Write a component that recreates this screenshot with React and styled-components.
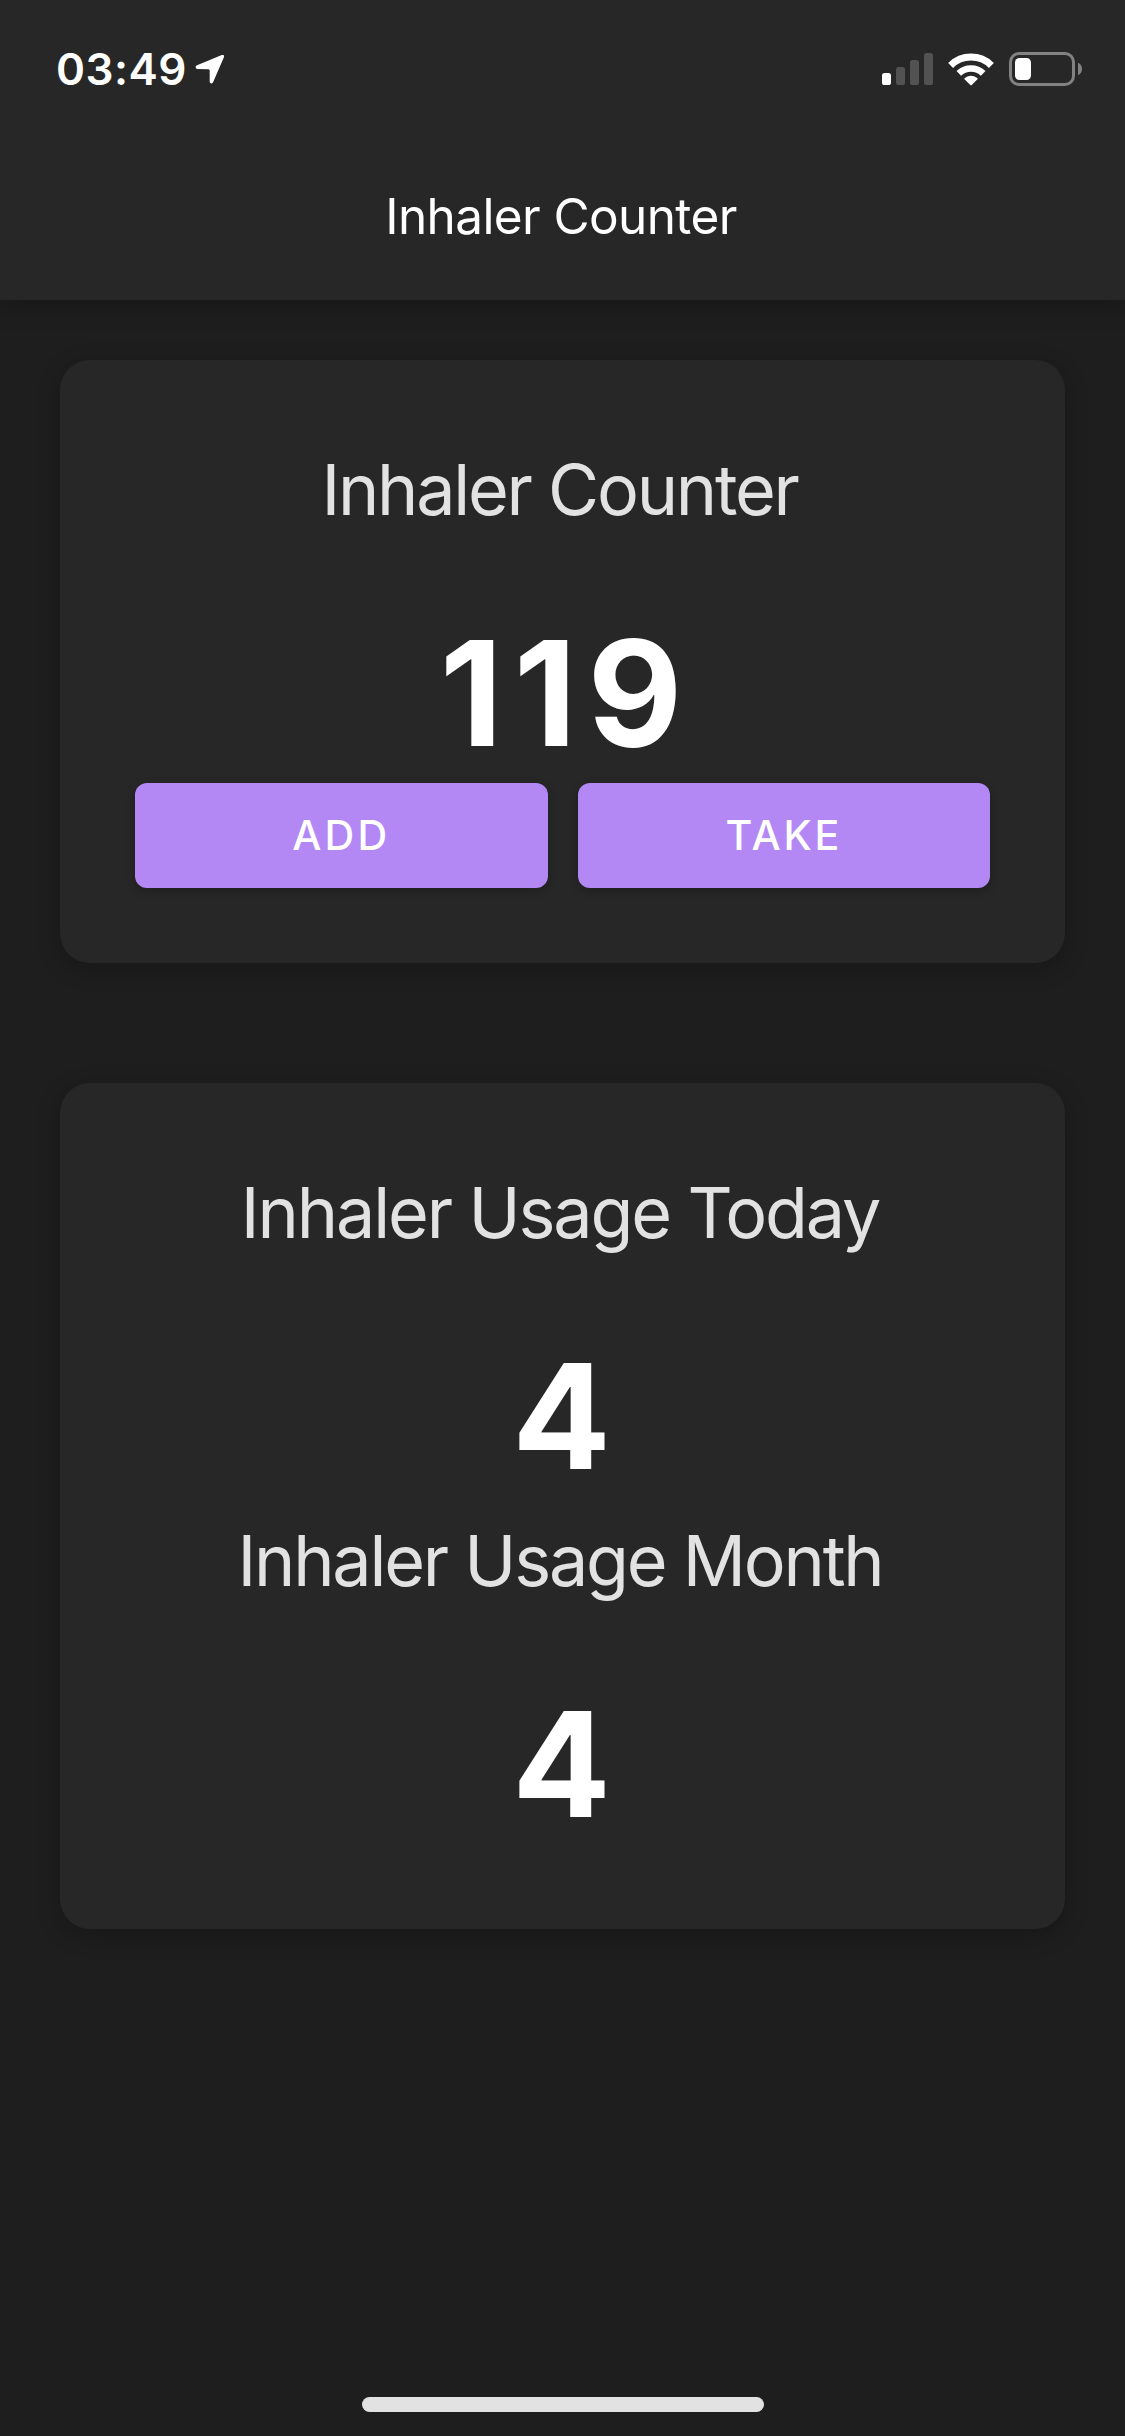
import React from "react";
import styled, { createGlobalStyle } from "styled-components";

const GlobalStyle = createGlobalStyle`
  * { box-sizing: border-box; }
  body { margin: 0; background: #1e1e1e; }
`;

const Screen = styled.div`
  width: 1125px;
  height: 2436px;
  display: flex;
  flex-direction: column;
  background: #1e1e1e;
  color: #fff;
  font-family: Inter, "Liberation Sans", sans-serif;
  overflow: hidden;
`;

const Header = styled.header`
  flex: none;
  height: 300px;
  background: #272727;
  box-shadow: 0 6px 24px rgba(0, 0, 0, 0.24);
`;

const StatusBar = styled.div`
  height: 132px;
  padding: 42px 43px 36px 56px;
  display: flex;
  align-items: center;
  justify-content: space-between;
`;

const StatusGroup = styled.div`
  display: flex;
  align-items: center;
`;

const Clock = styled.span`
  width: 139px;
  font-size: 44px;
  line-height: 54px;
  font-weight: 600;
  letter-spacing: 0.5px;
`;

const StatusIcon = styled.svg`
  display: block;
  flex: none;
  margin-left: ${(p) => p.$gap || 0}px;
`;

const HeaderTitle = styled.h1`
  margin: 0;
  padding-right: 3px;
  font-size: 49.5px;
  line-height: 168px;
  font-weight: 400;
  letter-spacing: -0.6px;
  text-align: center;
`;

const Content = styled.main`
  flex: 1;
  padding: 60px;
  display: flex;
  flex-direction: column;
  gap: 120px;
`;

const Card = styled.section`
  padding: 75px;
  border-radius: 30px;
  background: #272727;
  box-shadow: 0 6px 24px rgba(0, 0, 0, 0.24);
`;

const CardHeading = styled.h2`
  margin: 0 0 59px;
  padding-right: ${(p) => p.$shift ?? 6}px;
  color: #e2e2e2;
  font-size: 70px;
  line-height: 109px;
  font-weight: 400;
  letter-spacing: ${(p) => p.$tracking}px;
  text-align: center;
  white-space: nowrap;
`;

const Count = styled.div`
  padding: ${(p) => (p.$tracking ? "0 0 0 8px" : "0 2px 0 0")};
  font-size: 146px;
  line-height: 180px;
  font-weight: ${(p) => (p.$tracking ? 700 : 730)};
  letter-spacing: ${(p) => p.$tracking || 0}px;
  text-align: center;
`;

const Actions = styled.div`
  display: grid;
  grid-template-columns: 1fr 1fr;
  gap: 30px;
`;

const Button = styled.button`
  height: 105px;
  padding: 0;
  border: 0;
  border-radius: 12px;
  background: #b388f5;
  box-shadow: 0 3px 9px rgba(0, 0, 0, 0.24);
  color: #fff;
  font-family: inherit;
  font-size: 41.2px;
  line-height: 105px;
  font-weight: 460;
  letter-spacing: ${(p) => p.$tracking}px;
  text-transform: uppercase;
`;

const HomeIndicator = styled.div`
  flex: none;
  align-self: center;
  width: 402px;
  height: 15px;
  margin-bottom: 24px;
  border-radius: 7.5px;
  background: #e2e2e2;
`;

function LocationArrow() {
  return (
    <StatusIcon width="30" height="30" viewBox="0 0 30 30">
      <path
        d="M2 11.2 26.8 1.1Q29.9 0.2 28.9 3.2L18.2 28Q17.3 29.9 15.8 29.3Q14.7 28.9 14.7 27.5V16.6Q14.7 15.4 13.5 15.3L2.3 14.9Q0.8 14.7 0.6 13.2Q0.5 11.9 2 11.2Z"
        fill="#fff"
      />
    </StatusIcon>
  );
}

const bars = [
  { x: 0, y: 20, on: true },
  { x: 14, y: 14 },
  { x: 28, y: 7 },
  { x: 42, y: 0 },
];

function Signal() {
  return (
    <StatusIcon width="51" height="32" viewBox="0 0 51 32">
      {bars.map((b) => (
        <rect key={b.x} x={b.x} y={b.y} width="9" height={32 - b.y} rx="2.6" fill={b.on ? "#fff" : "#525252"} />
      ))}
    </StatusIcon>
  );
}

function Wifi() {
  return (
    <StatusIcon $gap={15} width="46" height="33" viewBox="0 0 46 33">
      <g fill="none" stroke="#fff">
        <path d="M2.6 12.4A29.2 29.2 0 0 1 43.4 12.4" strokeWidth="7" />
        <path d="M10.8 20.4A17.6 17.6 0 0 1 35.2 20.4" strokeWidth="6.6" />
      </g>
      <path d="M16.5 26.2Q15.8 25.5 16.8 24.9A10.5 10.5 0 0 1 29.2 24.9Q30.2 25.5 29.5 26.2L23.7 32.1Q23 32.8 22.3 32.1Z" fill="#fff" />
    </StatusIcon>
  );
}

function Battery() {
  return (
    <StatusIcon $gap={15} width="73" height="34" viewBox="0 0 73 34">
      <rect x="1.5" y="1.5" width="63" height="31" rx="8.5" fill="none" stroke="#828282" strokeWidth="3" />
      <rect x="6" y="6" width="16" height="22" rx="4.5" fill="#fff" />
      <path d="M69 10.8Q73 12.7 73 17T69 23.2Z" fill="#828282" />
    </StatusIcon>
  );
}

export default function App() {
  return (
    <>
      <GlobalStyle />
      <Screen>
        <Header>
          <StatusBar>
            <StatusGroup>
              <Clock>03:49</Clock>
              <LocationArrow />
            </StatusGroup>
            <StatusGroup>
              <Signal />
              <Wifi />
              <Battery />
            </StatusGroup>
          </StatusBar>
          <HeaderTitle>Inhaler Counter</HeaderTitle>
        </Header>
        <Content>
          <Card>
            <CardHeading $tracking={-2.25}>Inhaler Counter</CardHeading>
            <Count $tracking={10.9}>119</Count>
            <Actions>
              <Button $tracking={3.1}>Add</Button>
              <Button $tracking={2.7}>Take</Button>
            </Actions>
          </Card>
          <Card>
            <CardHeading $tracking={-2.12} $shift={5}>Inhaler Usage Today</CardHeading>
            <Count>4</Count>
            <CardHeading $tracking={-2.22} $shift={5}>Inhaler Usage Month</CardHeading>
            <Count>4</Count>
          </Card>
        </Content>
        <HomeIndicator />
      </Screen>
    </>
  );
}
